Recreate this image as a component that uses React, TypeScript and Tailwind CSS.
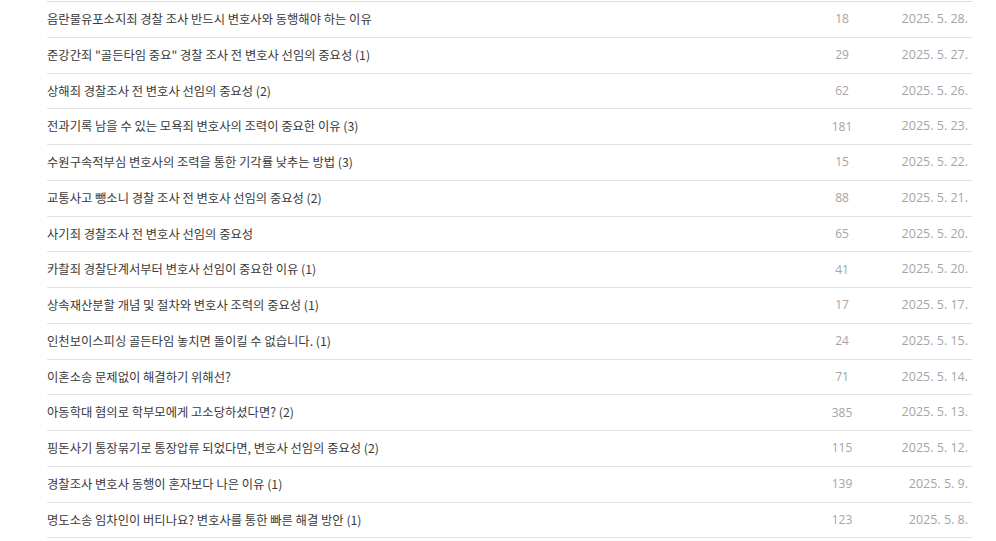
const posts = [
  { title: "음란물유포소지죄 경찰 조사 반드시 변호사와 동행해야 하는 이유", views: 18, date: "2025. 5. 28." },
  { title: "준강간죄 \"골든타임 중요\" 경찰 조사 전 변호사 선임의 중요성 (1)", views: 29, date: "2025. 5. 27." },
  { title: "상해죄 경찰조사 전 변호사 선임의 중요성 (2)", views: 62, date: "2025. 5. 26." },
  { title: "전과기록 남을 수 있는 모욕죄 변호사의 조력이 중요한 이유 (3)", views: 181, date: "2025. 5. 23." },
  { title: "수원구속적부심 변호사의 조력을 통한 기각률 낮추는 방법 (3)", views: 15, date: "2025. 5. 22." },
  { title: "교통사고 뺑소니 경찰 조사 전 변호사 선임의 중요성 (2)", views: 88, date: "2025. 5. 21." },
  { title: "사기죄 경찰조사 전 변호사 선임의 중요성", views: 65, date: "2025. 5. 20." },
  { title: "카촬죄 경찰단계서부터 변호사 선임이 중요한 이유 (1)", views: 41, date: "2025. 5. 20." },
  { title: "상속재산분할 개념 및 절차와 변호사 조력의 중요성 (1)", views: 17, date: "2025. 5. 17." },
  { title: "인천보이스피싱 골든타임 놓치면 돌이킬 수 없습니다. (1)", views: 24, date: "2025. 5. 15." },
  { title: "이혼소송 문제없이 해결하기 위해선?", views: 71, date: "2025. 5. 14." },
  { title: "아동학대 혐의로 학부모에게 고소당하셨다면? (2)", views: 385, date: "2025. 5. 13." },
  { title: "핑돈사기 통장묶기로 통장압류 되었다면, 변호사 선임의 중요성 (2)", views: 115, date: "2025. 5. 12." },
  { title: "경찰조사 변호사 동행이 혼자보다 나은 이유 (1)", views: 139, date: "2025. 5. 9." },
  { title: "명도소송 임차인이 버티나요? 변호사를 통한 빠른 해결 방안 (1)", views: 123, date: "2025. 5. 8." },
];

export default function App() {
  return (
    <div className="w-[996px] h-[541px] bg-white overflow-hidden font-['Noto_Sans_CJK_KR','Noto_Sans',sans-serif]">
      <div className="ml-[47px] w-[925px] pt-px">
        <ul className="border-t border-[#dedede]">
          {posts.map((p) => (
            <li key={p.title + p.date} className="flex items-center h-[35.75px] border-b border-[#e3e3e3]">
              <span className="flex-1 min-w-0 truncate text-[12.3px] text-[#3a3a3a]">{p.title}</span>
              <span className="w-[80px] text-center text-[12px] text-[#a5a5a5] font-['Open_Sans',sans-serif]">{p.views}</span>
              <span className="w-[90px] pr-1 text-right text-[12.5px] text-[#a5a5a5] font-['Open_Sans',sans-serif]">{p.date}</span>
            </li>
          ))}
        </ul>
      </div>
    </div>
  );
}
